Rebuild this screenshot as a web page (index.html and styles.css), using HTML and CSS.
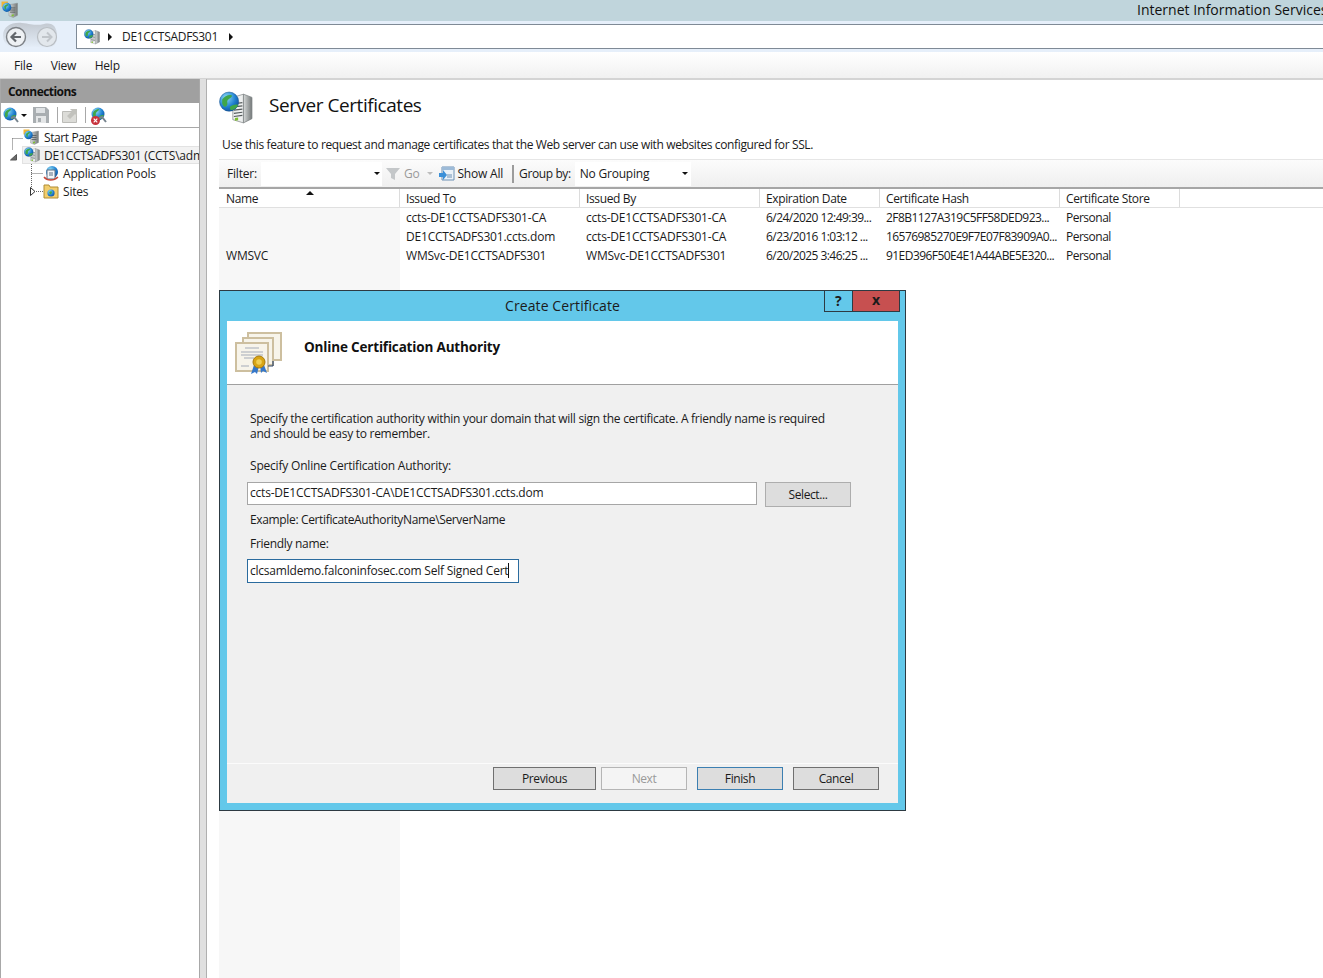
FILE: index.html
```html
<!DOCTYPE html>
<html lang="en">
<head>
  <meta charset="UTF-8">
  <title>Internet Information Services (IIS) Manager</title>
  <link rel="stylesheet" href="styles.css">
</head>
<body>
  <svg class="defs" width="0" height="0" aria-hidden="true">
    <defs>
      <linearGradient id="tower-side" x1="0" x2="1" y1="0" y2="0">
        <stop offset="0" stop-color="#d6d9d9"/>
        <stop offset="1" stop-color="#747979"/>
      </linearGradient>
      <linearGradient id="bone" x1="0" x2="0" y1="0" y2="1">
        <stop offset="0" stop-color="#c3c9d1"/>
        <stop offset="1" stop-color="#e6effa"/>
      </linearGradient>
      <radialGradient id="globe" cx="0.35" cy="0.3" r="0.8">
        <stop offset="0" stop-color="#8fdcf5"/>
        <stop offset="0.6" stop-color="#1f7fd0"/>
        <stop offset="1" stop-color="#0f4d96"/>
      </radialGradient>
      <symbol id="server-globe" viewBox="0 0 32 32">
        <path d="M13 6l10-3v27l-10-3z" fill="#eef0f0" stroke="#858a8b" stroke-width=".7"/>
        <path d="M23 3l8 3v20l-8 4z" fill="url(#tower-side)" stroke="#7a7f80" stroke-width=".7"/>
        <path d="M14 12l8-1M14 15l8-1M14 18l8-1M14 21l8-1M14 24l8-1" stroke="#555b5c" stroke-width="1.1"/>
        <circle cx="9.5" cy="10" r="9" fill="url(#globe)" stroke="#14518f" stroke-width=".5"/>
        <path d="M3 8c2-3 6-5 9-4 1 2-3 3-4 5s1 3-1 5-3 0-4-2zM10 15c2-2 6-3 8-2-1 3-4 5-7 5z" fill="#3fa64a"/>
        <path d="M15 25.500l3-.5v2.500l-3 .5z" fill="#7ec02f"/>
      </symbol>
      <symbol id="start-page" viewBox="0 0 32 32">
        <path d="M1 1h12v10H1z" fill="#f2b533"/>
        <path d="M15 7l16-3v23l-8 4-8-3z" fill="url(#tower-side)" stroke="#7a7f80" stroke-width=".7"/>
        <path d="M17 13h10M17 17h10M17 21h10" stroke="#555b5c" stroke-width="1.6"/>
        <circle cx="11" cy="12" r="8.500" fill="url(#globe)"/>
        <path d="M6 10c2-3 5-4 8-4 0 3-3 3-4 5s0 3-1 5-3-3-3-6z" fill="#3fa64a"/>
        <path d="M20 26l4-1v3l-4 1z" fill="#7ec02f"/>
      </symbol>
      <symbol id="cert-stack" viewBox="0 0 48 44">
        <g fill="#f7f4ea" stroke="#cdbf9f" stroke-width="2">
          <path d="M13 2h33v27H13z"/>
          <path d="M8 7h30v27H8z"/>
          <path d="M1 12h32v28H1z"/>
        </g>
        <path d="M33 35h5M38 30v5" stroke="#30496e" stroke-width="1.2"/>
        <g stroke="#a4abb8" stroke-width="1">
          <path d="M10 17h14M6 21h22M6 24h22M9 27h10M6 35h8"/>
        </g>
        <path d="M19 34l-3 9 4-2 2 2 2-8zM25 34l1 8 2-2 4 2-3-8z" fill="#3577c9"/>
        <circle cx="24" cy="31" r="6" fill="#d8a515" stroke="#a87a0c"/>
        <circle cx="24" cy="31" r="2.800" fill="#f0cf55"/>
      </symbol>
      <symbol id="globe-connect" viewBox="0 0 16 16">
        <circle cx="7" cy="7" r="6.500" fill="url(#globe)"/>
        <path d="M2 6c1-3 4-4 6-4 0 2-2 2-3 4s1 2-1 4-2-2-2-4zM8 10c1-2 3-2 5-2-1 3-3 4-5 4z" fill="#3fa64a"/>
        <path d="M8 11l3-1 4 5" fill="none" stroke="#77848e" stroke-width="2"/>
      </symbol>
    </defs>
  </svg>

  <div class="app">
    <header class="titlebar">
      <svg class="app-icon"><use href="#start-page"/></svg>
      <span class="app-title">Internet Information Services (IIS) Manager</span>
    </header>

    <nav class="navbar">
      <svg class="nav-arrows" viewBox="0 0 60 30">
        <path d="M3 15C3 5 12 1 22 2s14 3 22 1 13 2 13 12-5 13-13 12-14-2-22 0S3 25 3 15z" fill="url(#bone)"/>
        <circle cx="16" cy="16" r="9.500" fill="#eef1f4" stroke="#7d8186" stroke-width="1.400"/>
        <path d="M21 16h-9M16 11.500L11.500 16l4.500 4.500" fill="none" stroke="#63676c" stroke-width="2.200"/>
        <circle cx="47" cy="16" r="9.500" fill="#e2e7ec" stroke="#b9bec3" stroke-width="1.200"/>
        <path d="M42 16h9M47 11.500l4.500 4.500-4.500 4.500" fill="none" stroke="#c0c5ca" stroke-width="2"/>
      </svg>
      <div class="crumbs">
        <svg class="icon16"><use href="#server-globe"/></svg>
        <span class="crumb-arrow"></span>
        <span class="crumb-text">DE1CCTSADFS301</span>
        <span class="crumb-arrow"></span>
      </div>
    </nav>

    <div class="menubar">
      <span>File</span>
      <span>View</span>
      <span>Help</span>
    </div>

    <div class="workspace">
      <aside class="connections">
        <div class="connections-head">Connections</div>
        <div class="connections-tools">
          <svg class="icon16"><use href="#globe-connect"/></svg>
          <span class="drop-arrow"></span>
          <svg class="tool-disk" viewBox="0 0 16 16"><path d="M0 0h13l3 3v13H0z" fill="#a9aeb1"/><path d="M3 1h9v5H3z" fill="#dfe2e4"/><path d="M3 9h10v7H3z" fill="#e4e6e7"/><path d="M5 11h3v4H5z" fill="#a9aeb1"/></svg>
          <span class="tool-sep"></span>
          <svg class="tool-up" viewBox="0 0 16 16"><path d="M.5 4.500h14v11H.5z" fill="#dcdcd8" stroke="#bcbcb8"/><path d="M5 9l5-5-2-2h7v7l-2-2-5 5z" fill="#c2c2bd"/></svg>
          <span class="tool-sep"></span>
          <span class="tool-disconnect">
            <svg class="icon16"><use href="#globe-connect"/></svg>
            <svg class="tool-x" viewBox="0 0 10 10"><circle cx="5" cy="5" r="5" fill="#c8323c"/><path d="M3 3l4 4M7 3l-4 4" stroke="#fff" stroke-width="1.300"/></svg>
          </span>
        </div>
        <div class="tree-wrap">
          <svg class="tree-lines" width="60" height="72">
            <path d="M12.500 10.500V22M12.500 10.500H23M31.500 36V63M31.500 45.500H43M36 63.500H43" fill="none" stroke="#666" stroke-dasharray="1 1"/>
            <path d="M16.500 26.500v5.500h-6z" fill="#6a6a6a" stroke="#555"/>
            <path d="M30.500 59.500l4.500 4-4.500 4z" fill="#fff" stroke="#333"/>
          </svg>
          <ul class="tree">
            <li class="tree-item level-start">
              <svg class="icon16"><use href="#start-page"/></svg>
              <span>Start Page</span>
            </li>
            <li class="tree-item level-server">
              <svg class="icon16"><use href="#server-globe"/></svg>
              <span>DE1CCTSADFS301 (CCTS\administrator)</span>
            </li>
            <li class="tree-item level-child">
              <svg class="icon16" viewBox="0 0 16 16"><circle cx="9" cy="7" r="6" fill="url(#globe)"/><path d="M4 5h8v9H4z" fill="#f4f6f8" stroke="#5d6f84"/><path d="M6 8h4M6 10h4" stroke="#5d6f84"/><path d="M1 12c3 4 10 4 14 0" fill="none" stroke="#c8473a" stroke-width="1.400"/></svg>
              <span>Application Pools</span>
            </li>
            <li class="tree-item level-child">
              <svg class="icon16" viewBox="0 0 16 16"><path d="M1 2h5l1 2h8v11H1z" fill="#f2cd6c" stroke="#b08d35"/><circle cx="8" cy="10" r="3.600" fill="url(#globe)"/><path d="M6 9c1-1 3-1 3 0s-1 3-2 2z" fill="#3fa64a"/></svg>
              <span>Sites</span>
            </li>
          </ul>
        </div>
      </aside>

      <div class="splitter"></div>

      <main class="content">
        <div class="page-head">
          <svg class="page-icon"><use href="#server-globe"/></svg>
          <h1>Server Certificates</h1>
        </div>
        <p class="page-desc">Use this feature to request and manage certificates that the Web server can use with websites configured for SSL.</p>

        <div class="filterbar">
          <span class="filter-label">Filter:</span>
          <span class="combo filter-combo"><span class="drop-arrow"></span></span>
          <svg class="funnel" viewBox="0 0 14 14"><path d="M0 1h14L9 7v6l-4-2V7z" fill="#c4c7c9"/></svg>
          <span class="muted">Go</span>
          <span class="drop-arrow pale"></span>
          <svg class="showall" viewBox="0 0 16 16"><path d="M3 1h12v13H3z" fill="#eaf1f8" stroke="#6d90b4"/><path d="M3 1h12v3H3z" fill="#9dbbd8"/><path d="M8 9h5M8 11h5" stroke="#6d90b4"/><path d="M0 7h4V4l4 5-4 5v-3H0z" fill="#3a8fd8"/></svg>
          <span>Show All</span>
          <span class="bar-sep"></span>
          <span class="group-label">Group by:</span>
          <span class="combo group-combo">No Grouping<span class="drop-arrow"></span></span>
        </div>

        <div class="list">
          <div class="list-row list-head">
            <span class="col-name">Name<i class="sort-arrow"></i></span>
            <span>Issued To</span>
            <span>Issued By</span>
            <span>Expiration Date</span>
            <span>Certificate Hash</span>
            <span>Certificate Store</span>
          </div>
          <div class="list-row">
            <span class="col-name"></span>
            <span>ccts-DE1CCTSADFS301-CA</span>
            <span>ccts-DE1CCTSADFS301-CA</span>
            <span class="col-num">6/24/2020 12:49:39...</span>
            <span class="col-num">2F8B1127A319C5FF58DED923...</span>
            <span class="col-store">Personal</span>
          </div>
          <div class="list-row">
            <span class="col-name"></span>
            <span>DE1CCTSADFS301.ccts.dom</span>
            <span>ccts-DE1CCTSADFS301-CA</span>
            <span class="col-num">6/23/2016 1:03:12 ...</span>
            <span class="col-num">16576985270E9F7E07F83909A0...</span>
            <span class="col-store">Personal</span>
          </div>
          <div class="list-row">
            <span class="col-name">WMSVC</span>
            <span>WMSvc-DE1CCTSADFS301</span>
            <span>WMSvc-DE1CCTSADFS301</span>
            <span class="col-num">6/20/2025 3:46:25 ...</span>
            <span class="col-num">91ED396F50E4E1A44ABE5E320...</span>
            <span class="col-store">Personal</span>
          </div>
        </div>
      </main>
    </div>
  </div>

  <section class="dialog">
    <div class="dialog-title">
      <span>Create Certificate</span>
      <div class="dialog-ctrls">
        <span class="ctrl-help">?</span>
        <span class="ctrl-close">x</span>
      </div>
    </div>
    <div class="dialog-inner">
      <div class="dialog-head">
        <svg class="cert-icon"><use href="#cert-stack"/></svg>
        <h2>Online Certification Authority</h2>
      </div>
      <div class="dialog-body">
        <p class="dialog-intro">Specify the certification authority within your domain that will sign the certificate. A friendly name is required and should be easy to remember.</p>
        <label class="dialog-label">Specify Online Certification Authority:</label>
        <div class="ca-row">
          <div class="field ca-field">ccts-DE1CCTSADFS301-CA\DE1CCTSADFS301.ccts.dom</div>
          <button class="btn select-btn">Select...</button>
        </div>
        <p class="dialog-example">Example: CertificateAuthorityName\ServerName</p>
        <label class="dialog-label friendly-label">Friendly name:</label>
        <div class="field name-field">clcsamldemo.falconinfosec.com Self Signed Cert<span class="caret"></span></div>
      </div>
      <div class="dialog-foot">
        <button class="btn btn-prev">Previous</button>
        <button class="btn btn-next" disabled>Next</button>
        <button class="btn btn-finish">Finish</button>
        <button class="btn btn-cancel">Cancel</button>
      </div>
    </div>
  </section>
</body>
</html>
```

FILE: styles.css
```css
* {
  box-sizing: border-box;
}
html, body {
  margin: 0;
  height: 100%;
  overflow: hidden;
}
body {
  font-family: "Open Sans", "Noto Sans", sans-serif;
  font-size: 12px;
  letter-spacing: -0.2px;
  color: #1a1a1a;
  background: #fff;
  position: relative;
}
h1, h2, p, ul {
  margin: 0;
  padding: 0;
  font-weight: normal;
}
.defs {
  position: absolute;
}
.icon16 {
  width: 16px;
  height: 16px;
  flex: none;
}
.app {
  height: 978px;
  display: flex;
  flex-direction: column;
}

/* title bar */
.titlebar {
  height: 21px;
  flex: none;
  display: flex;
  align-items: center;
  background: #c0d5dc;
  white-space: nowrap;
  overflow: hidden;
}
.app-icon {
  width: 17px;
  height: 17px;
  margin: 0 0 2px 1px;
  flex: none;
}
.app-title {
  margin-left: 1119px;
  padding-bottom: 2px;
  font-size: 14px;
  letter-spacing: 0;
  color: #111;
}

/* address bar */
.navbar {
  height: 31px;
  flex: none;
  display: flex;
  align-items: flex-start;
  background: #e6effa;
}
.nav-arrows {
  width: 60px;
  height: 30px;
  flex: none;
}
.crumbs {
  margin: 3px 0 0 16px;
  flex: 1;
  height: 25px;
  display: flex;
  align-items: center;
  gap: 8px;
  background: #fff;
  border: 1px solid #7f8a96;
  border-right: 0;
  padding-left: 7px;
}
.crumb-arrow {
  width: 0;
  height: 0;
  border-left: 4px solid #111;
  border-top: 4px solid transparent;
  border-bottom: 4px solid transparent;
}
.crumb-text {
  margin: -1px 3px 0 2px;
  letter-spacing: -0.3px;
}

/* menu */
.menubar {
  height: 27px;
  flex: none;
  display: flex;
  align-items: center;
  gap: 18.5px;
  padding-left: 14px;
  background: linear-gradient(#fff, #f1f1f1);
  border-bottom: 1px solid #d4d4d4;
}

/* left panel */
.workspace {
  flex: 1;
  display: flex;
  min-height: 0;
}
.connections {
  width: 200px;
  flex: none;
  background: #fff;
  border-right: 1px solid #a8a8a8;
  border-left: 1px solid #a8a8a8;
  overflow: hidden;
}
.connections-head {
  height: 24px;
  margin-left: -1px;
  padding-left: 8px;
  display: flex;
  align-items: center;
  font-weight: 700;
  letter-spacing: -0.55px;
  background: #a0a0a0;
  color: #111;
}
.connections-tools {
  height: 25px;
  display: flex;
  align-items: center;
  padding-left: 2px;
  border-bottom: 1px solid #a8a8a8;
}
.drop-arrow {
  display: inline-block;
  width: 0;
  height: 0;
  border-top: 3px solid #111;
  border-left: 3px solid transparent;
  border-right: 3px solid transparent;
}
.drop-arrow.pale {
  border-top-color: #bdbdbd;
  margin: 0 6px 0 8px;
}
.connections-tools .drop-arrow {
  margin-left: 2px;
}
.tool-disk {
  width: 16px;
  height: 16px;
  margin-left: 6px;
}
.tool-sep {
  width: 1px;
  height: 16px;
  margin: 0 4px 0 8px;
  background: #a8a8a8;
}
.tool-up {
  width: 16px;
  height: 16px;
  margin-right: -1px;
}
.tool-disconnect {
  position: relative;
  width: 16px;
  height: 16px;
  margin-left: 1px;
}
.tool-x {
  position: absolute;
  left: 0;
  bottom: -2px;
  width: 9px;
  height: 9px;
}
.tree-wrap {
  position: relative;
}
.tree-lines {
  position: absolute;
  left: -1px;
  top: 0;
}
.tree {
  list-style: none;
  position: relative;
}
.tree-item {
  height: 18px;
  display: flex;
  align-items: center;
  gap: 4px;
  white-space: nowrap;
}
.level-start {
  padding-left: 22px;
  gap: 5px;
  letter-spacing: -0.4px;
}
.level-server {
  margin-left: 21px;
  padding-left: 1px;
  background: #f2f2f2;
  border: 1px solid #e2e2e2;
  border-right: 0;
}
.level-child {
  padding-left: 42px;
}
.splitter {
  width: 7px;
  flex: none;
  background: #e0e0e0;
  border-right: 1px solid #b0b0b0;
}

/* feature page */
.content {
  flex: 1;
  min-width: 0;
  display: flex;
  flex-direction: column;
  background: #fff;
  border-top: 1px solid #d4d4d4;
}
.page-head {
  height: 47px;
  display: flex;
  align-items: center;
  gap: 16px;
  padding: 2px 0 0 12px;
}
.page-icon {
  width: 34px;
  height: 34px;
  margin-top: 6px;
}
h1 {
  font-size: 19px;
  letter-spacing: -0.45px;
  color: #111;
}
.page-desc {
  margin: 9px 0 0 15px;
  height: 23px;
  letter-spacing: -0.37px;
}
.filterbar {
  height: 30px;
  margin-left: 12px;
  padding-left: 8px;
  display: flex;
  align-items: center;
  background: linear-gradient(#fcfcfc, #efefef);
  border-top: 1px solid #e6e6e6;
  border-bottom: 2px solid #a6a6a6;
}
.combo {
  display: flex;
  align-items: center;
  height: 24px;
  background: #fff;
}
.filter-combo {
  width: 121px;
  margin-left: 4px;
  justify-content: flex-end;
  padding-right: 2px;
}
.funnel {
  width: 14px;
  height: 14px;
  margin-left: 4px;
}
.muted {
  color: #9a9a9a;
  margin-left: 4px;
}
.showall {
  width: 16px;
  height: 16px;
  margin-right: 2px;
}
.bar-sep {
  width: 2px;
  height: 18px;
  margin: 0 5px 0 9px;
  background: #9c9c9c;
}
.group-label {
  letter-spacing: -0.4px;
}
.group-combo {
  width: 116px;
  margin-left: 4px;
  padding-left: 5px;
  justify-content: space-between;
  padding-right: 3px;
}
.list {
  flex: 1;
  margin-left: 12px;
  background: linear-gradient(to right, #f7f7f7 181px, #fff 181px);
}
.list-row {
  height: 19px;
  display: grid;
  grid-template-columns: 181px 180px 180px 120px 180px 120px;
  align-items: center;
  white-space: nowrap;
}
.list-row span {
  padding-left: 6px;
  overflow: hidden;
}
.list-row .col-name {
  padding-left: 7px;
}
.list-row .col-num {
  letter-spacing: -0.55px;
}
.list-row .col-store {
  letter-spacing: -0.5px;
}
.list-head {
  border-bottom: 1px solid #e0e0e0;
  letter-spacing: -0.37px;
}
.list-head span {
  height: 18px;
  line-height: 20px;
  background: #fff;
  border-right: 1px solid #dcdcdc;
  position: relative;
}
.sort-arrow {
  position: absolute;
  left: 87px;
  top: 2px;
  width: 0;
  height: 0;
  border-bottom: 4px solid #111;
  border-left: 4px solid transparent;
  border-right: 4px solid transparent;
}

/* dialog window */
.dialog {
  position: absolute;
  left: 219px;
  top: 290px;
  width: 687px;
  height: 521px;
  display: flex;
  flex-direction: column;
  background: #63c8ea;
  border: 1px solid #2d3a42;
  padding: 0 7px 7px;
}
.dialog-title {
  height: 30px;
  flex: none;
  position: relative;
  display: flex;
  align-items: center;
  justify-content: center;
  font-size: 14px;
  letter-spacing: 0.1px;
  color: #1b1b1b;
  padding-bottom: 1px;
}
.dialog-ctrls {
  position: absolute;
  top: 0;
  right: -2px;
  height: 21px;
  display: flex;
  font-weight: 700;
  border: 1px solid #2d3a42;
  border-top: 0;
}
.ctrl-help {
  width: 28px;
  text-align: center;
  line-height: 19px;
  border-right: 1px solid #2d3a42;
}
.ctrl-close {
  width: 46px;
  text-align: center;
  line-height: 17px;
  background: #c75050;
}
.dialog-inner {
  flex: 1;
  display: flex;
  flex-direction: column;
  background: #f0f0f0;
  min-height: 0;
}
.dialog-head {
  height: 64px;
  flex: none;
  display: flex;
  align-items: center;
  background: #fff;
  border-bottom: 1px solid #a0a0a0;
}
.cert-icon {
  width: 48px;
  height: 44px;
  margin: 0 21px 0 8px;
}
h2 {
  font-size: 13.5px;
  font-weight: 700;
  letter-spacing: -0.17px;
  color: #111;
  padding-bottom: 11px;
}
.dialog-body {
  flex: 1;
  padding: 26px 20px 0 23px;
}
.dialog-intro {
  width: 590px;
  line-height: 15px;
  letter-spacing: -0.28px;
}
.dialog-label {
  display: block;
  line-height: 16px;
}
.dialog-intro + .dialog-label {
  margin-top: 17px;
}
.ca-row {
  display: flex;
  align-items: flex-start;
  gap: 8px;
  margin: 8px 0 0 -3px;
}
.field {
  height: 23px;
  line-height: 20px;
  padding-left: 2px;
  background: #fff;
  border: 1px solid #a6a6a6;
  white-space: nowrap;
}
.ca-field {
  width: 510px;
}
.dialog-example {
  margin-top: 5px;
  line-height: 16px;
  letter-spacing: -0.35px;
}
.friendly-label {
  margin-top: 8px;
  letter-spacing: -0.3px;
}
.name-field {
  width: 272px;
  height: 24px;
  margin: 7px 0 0 -3px;
  line-height: 21px;
  letter-spacing: -0.22px;
  border-color: #2a6b9e;
}
.caret {
  display: inline-block;
  width: 1px;
  height: 15px;
  vertical-align: -3px;
  background: #111;
}
.btn {
  font: inherit;
  letter-spacing: -0.4px;
  color: #1a1a1a;
  padding: 0;
  background: #dddddd;
  border: 1px solid #707070;
}
.select-btn {
  width: 86px;
  height: 25px;
  border-color: #adadad;
}
.dialog-foot {
  height: 40px;
  flex: none;
  display: flex;
  align-items: flex-start;
  padding: 3px 0 0 266px;
  border-top: 1px solid #fbfbfb;
}
.btn-prev {
  width: 103px;
  height: 23px;
  margin-right: 5px;
}
.btn-next {
  width: 86px;
  height: 23px;
  margin-right: 10px;
  color: #9a9a9a;
  background: #f4f4f4;
  border-color: #b5b5b5;
}
.btn-finish {
  width: 86px;
  height: 23px;
  margin-right: 10px;
  border-color: #3c7fb1;
}
.btn-cancel {
  width: 86px;
  height: 23px;
}
```
